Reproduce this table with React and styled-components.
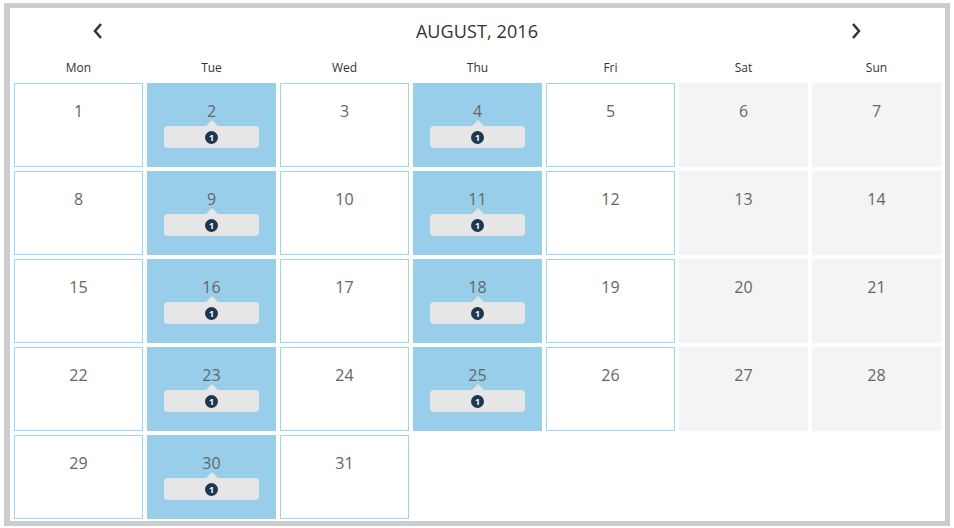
import React from 'react'
import styled, { createGlobalStyle } from 'styled-components'

const GlobalStyle = createGlobalStyle`
    body {
        margin: 0;
        background: #ffffff;
        font-family: "Open Sans", "Liberation Sans", sans-serif;
    }
`;

const Frame = styled.div`
    box-sizing: border-box;
    width: 946px;
    height: 523px;
    margin: 3px 0 0 4px;
    border: 5px solid #cccccc;
    border-left-width: 6px;
    padding: 0 4px 2px 4px;
    background: #ffffff;
    display: flex;
    flex-direction: column;
`;

const Header = styled.div`
    height: 46px;
    display: flex;
    align-items: center;
    justify-content: space-between;
    padding: 0 76px 0 75px;
`;

const NavButton = styled.button`
    width: 18px;
    height: 24px;
    padding: 0;
    border: none;
    background: transparent;
    cursor: pointer;
    display: flex;
    align-items: center;
    justify-content: center;
`;

const Title = styled.h2`
    margin: 0;
    font-size: 18px;
    font-weight: 400;
    color: #333333;
    letter-spacing: 0.1px;
`;

const DayRow = styled.div`
    display: grid;
    grid-template-columns: repeat(7, 129px);
    column-gap: 4px;
    height: 26px;
    padding-top: 1px;
    margin-bottom: 2px;
`;

const DayName = styled.div`
    text-align: center;
    font-size: 12px;
    line-height: 26px;
    color: #333333;
`;

const Grid = styled.div`
    display: grid;
    grid-template-columns: repeat(7, 129px);
    grid-auto-rows: 84px;
    gap: 4px;
`;

const Cell = styled.div`
    box-sizing: border-box;
    display: flex;
    flex-direction: column;
    align-items: center;
    padding-top: ${p => (p.$kind === 'day' ? '16px' : '17px')};
    background: ${p =>
        p.$kind === 'busy' ? '#99ceeb' : p.$kind === 'weekend' ? '#f4f4f4' : '#ffffff'};
    border: ${p => (p.$kind === 'day' ? '1px solid #9fd3f0' : 'none')};
`;

const Num = styled.span`
    font-size: 16px;
    line-height: 22px;
    color: #666666;
`;

const Pill = styled.div`
    position: relative;
    width: 95px;
    height: 22px;
    margin-top: 4px;
    border-radius: 4px;
    background: #e6e6e6;
    display: flex;
    align-items: center;
    justify-content: center;
    &::before {
        content: '';
        position: absolute;
        top: -6px;
        left: 50%;
        margin-left: -6px;
        border-left: 6px solid transparent;
        border-right: 6px solid transparent;
        border-bottom: 6px solid #e6e6e6;
    }
`;

const Badge = styled.span`
    width: 13px;
    height: 13px;
    border-radius: 50%;
    background: #1e3750;
    color: #ffffff;
    font-size: 9px;
    font-weight: 700;
    line-height: 13px;
    text-align: center;
`;

const Chevron = ({ dir }) => (
    <svg width="12" height="16" viewBox="0 0 12 16">
        <path
            d={dir === 'left' ? 'M9 1 L3 8 L9 15' : 'M3 1 L9 8 L3 15'}
            fill="none"
            stroke="#333333"
            strokeWidth="2.5"
        />
    </svg>
);

const dayNames = ['Mon', 'Tue', 'Wed', 'Thu', 'Fri', 'Sat', 'Sun'];
const busyDays = [2, 4, 9, 11, 16, 18, 23, 25, 30];

const App = () => {
    const days = Array.from({ length: 31 }, (_, i) => i + 1);

    return (
        <>
            <GlobalStyle />
            <Frame>
                <Header>
                    <NavButton aria-label="previous month">
                        <Chevron dir="left" />
                    </NavButton>
                    <Title>AUGUST, 2016</Title>
                    <NavButton aria-label="next month">
                        <Chevron dir="right" />
                    </NavButton>
                </Header>
                <DayRow>
                    {dayNames.map(d => (
                        <DayName key={d}>{d}</DayName>
                    ))}
                </DayRow>
                <Grid>
                    {days.map(n => {
                        const weekday = (n - 1) % 7;
                        const busy = busyDays.includes(n);
                        const kind = busy ? 'busy' : weekday >= 5 ? 'weekend' : 'day';
                        return (
                            <Cell key={n} $kind={kind}>
                                <Num>{n}</Num>
                                {busy && (
                                    <Pill>
                                        <Badge>1</Badge>
                                    </Pill>
                                )}
                            </Cell>
                        );
                    })}
                </Grid>
            </Frame>
        </>
    )
}

export default App
